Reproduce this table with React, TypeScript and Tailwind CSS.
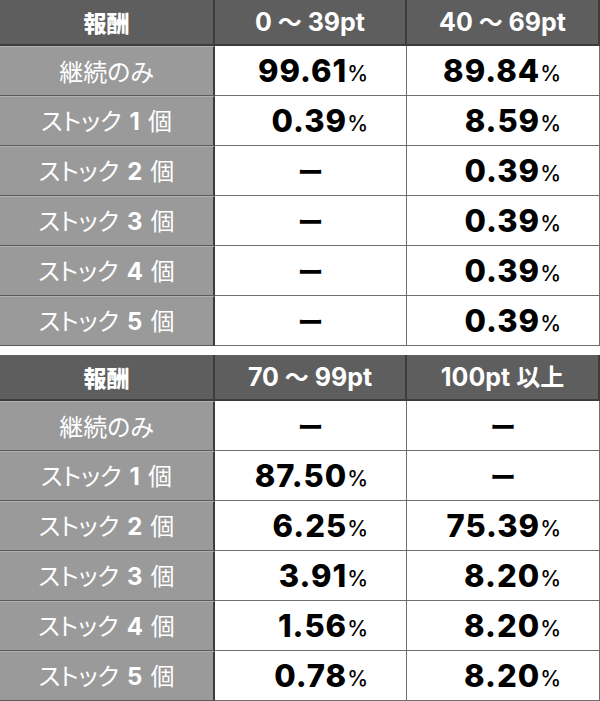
import React from "react";

type Row = { label: string; n?: string; a: string; b: string };

const JP = "font-['Noto_Sans_CJK_JP','Noto_Sans',sans-serif]";
const NUM = "font-['Inter','Liberation_Sans',sans-serif]";

function Val({ v }: { v: string }) {
  if (v === "-") {
    return (
      <div className="flex h-full items-center justify-center">
        <span className={`${JP} text-[26px] font-bold leading-none text-black`}>ー</span>
      </div>
    );
  }
  return (
    <div className="flex h-full items-center justify-end pr-[38px]">
      <span className={`${NUM} text-[31px] font-extrabold leading-none tracking-[1px] text-black`}>{v}</span>
      <span className={`${NUM} mt-[6px] text-[21px] font-medium leading-none text-black`}>%</span>
    </div>
  );
}

function Head({ c }: { c: string }) {
  const parts = c.split("～");
  return (
    <span className={`${NUM} text-[25px] font-bold leading-none text-white`}>
      {parts.length === 2 ? (
        <>
          {parts[0]}
          <span className={`${JP} text-[24px] font-bold`}>～</span>
          {parts[1]}
        </>
      ) : (
        <>
          100pt <span className={`${JP} text-[24px] font-bold`}>以上</span>
        </>
      )}
    </span>
  );
}

function Table({ cols, rows }: { cols: [string, string]; rows: Row[] }) {
  return (
    <div className="grid grid-cols-[215px_192px_193px]">
      <div className="flex h-[46px] items-center justify-center border-b-2 border-r-2 border-[#3c3c3c] bg-[#5e5e5e]">
        <span className={`${JP} text-[23px] font-black text-white`}>報酬</span>
      </div>
      {cols.map((c, i) => (
        <div
          key={i}
          className="flex h-[46px] items-center justify-center border-b-2 border-r-2 border-[#3c3c3c] bg-[#5e5e5e]"
        >
          <Head c={c} />
        </div>
      ))}
      {rows.map((r, i) => (
        <React.Fragment key={i}>
          <div className="flex h-[50px] items-center justify-center border-b border-r-2 border-t border-b-[#5a5a5a] border-r-[#3c3c3c] border-t-[#b0b0b0] bg-[#9a9a9a]">
            <span className={`${JP} text-[24px] font-normal leading-none text-white [font-feature-settings:'palt']`}>
              {r.n ? (
                <>
                  {r.label}
                  <span className={`${NUM} mx-[8px] text-[24px] font-bold`}>{r.n}</span>個
                </>
              ) : (
                r.label
              )}
            </span>
          </div>
          <div className="h-[50px] border-b border-r border-[#6e6e6e] bg-white">
            <Val v={r.a} />
          </div>
          <div className="h-[50px] border-b border-r border-[#6e6e6e] bg-white">
            <Val v={r.b} />
          </div>
        </React.Fragment>
      ))}
    </div>
  );
}

export default function App() {
  const t1: Row[] = [
    { label: "継続のみ", a: "99.61", b: "89.84" },
    { label: "ストック", n: "1", a: "0.39", b: "8.59" },
    { label: "ストック", n: "2", a: "-", b: "0.39" },
    { label: "ストック", n: "3", a: "-", b: "0.39" },
    { label: "ストック", n: "4", a: "-", b: "0.39" },
    { label: "ストック", n: "5", a: "-", b: "0.39" },
  ];
  const t2: Row[] = [
    { label: "継続のみ", a: "-", b: "-" },
    { label: "ストック", n: "1", a: "87.50", b: "-" },
    { label: "ストック", n: "2", a: "6.25", b: "75.39" },
    { label: "ストック", n: "3", a: "3.91", b: "8.20" },
    { label: "ストック", n: "4", a: "1.56", b: "8.20" },
    { label: "ストック", n: "5", a: "0.78", b: "8.20" },
  ];
  return (
    <div className="h-[701px] w-[600px] overflow-hidden bg-white">
      <Table cols={["0 ～ 39pt", "40 ～ 69pt"]} rows={t1} />
      <div className="h-[9px]" />
      <Table cols={["70 ～ 99pt", "100pt 以上"]} rows={t2} />
    </div>
  );
}
